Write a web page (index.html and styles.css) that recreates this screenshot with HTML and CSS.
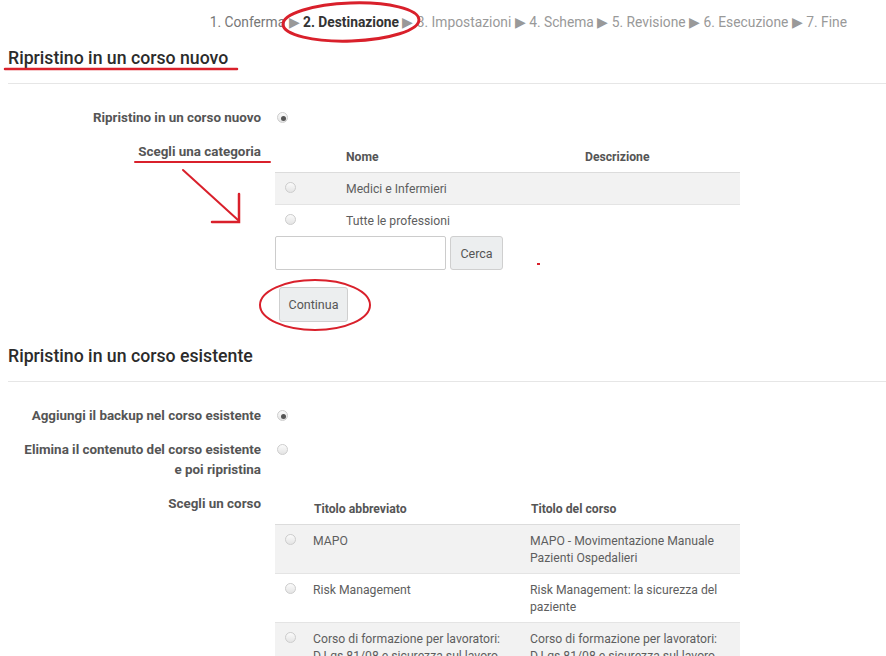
FILE: index.html
```html
<!DOCTYPE html>
<html lang="it">
<head>
    <meta charset="UTF-8">
    <title>Ripristino - Destinazione</title>
    <link rel="stylesheet" href="styles.css">
</head>
<body>
<div class="page">

    <div class="steps">
        <span class="done">1. Conferma</span> &#9654;
        <span class="current">2. Destinazione</span> &#9654;
        <span>3. Impostazioni</span> &#9654;
        <span>4. Schema</span> &#9654;
        <span>5. Revisione</span> &#9654;
        <span>6. Esecuzione</span> &#9654;
        <span>7. Fine</span>
    </div>

    <h2 class="section-title">Ripristino in un corso nuovo</h2>
    <div class="rule"></div>

    <div class="fields">
        <div class="field">
            <div class="label">Ripristino in un corso nuovo</div>
            <div class="control"><input type="radio" class="radio" checked></div>
        </div>
        <div class="field">
            <div class="label">Scegli una categoria</div>
            <div class="control">
                <table class="list list-cat">
                    <colgroup><col class="c-radio"><col class="c-name"><col></colgroup>
                    <thead>
                        <tr><th></th><th>Nome</th><th>Descrizione</th></tr>
                    </thead>
                    <tbody>
                        <tr class="odd"><td><input type="radio" class="radio" name="cat"></td><td>Medici e Infermieri</td><td></td></tr>
                        <tr><td><input type="radio" class="radio" name="cat"></td><td>Tutte le professioni</td><td></td></tr>
                    </tbody>
                </table>
                <div class="search">
                    <input type="text" class="search-input">
                    <button class="btn btn-search">Cerca</button>
                </div>
                <button class="btn btn-continue">Continua</button>
            </div>
        </div>
    </div>

    <h2 class="section-title second">Ripristino in un corso esistente</h2>
    <div class="rule"></div>

    <div class="fields">
        <div class="field">
            <div class="label">Aggiungi il backup nel corso esistente</div>
            <div class="control"><input type="radio" class="radio" name="mode" checked></div>
        </div>
        <div class="field">
            <div class="label">Elimina il contenuto del corso esistente e poi ripristina</div>
            <div class="control"><input type="radio" class="radio" name="mode"></div>
        </div>
        <div class="field">
            <div class="label">Scegli un corso</div>
            <div class="control">
                <table class="list list-course">
                    <colgroup><col class="c-radio2"><col class="c-short"><col></colgroup>
                    <thead>
                        <tr><th></th><th>Titolo abbreviato</th><th>Titolo del corso</th></tr>
                    </thead>
                    <tbody>
                        <tr class="odd"><td><input type="radio" class="radio" name="course"></td><td>MAPO</td><td>MAPO - Movimentazione Manuale Pazienti Ospedalieri</td></tr>
                        <tr><td><input type="radio" class="radio" name="course"></td><td>Risk Management</td><td>Risk Management: la sicurezza del paziente</td></tr>
                        <tr class="odd"><td><input type="radio" class="radio" name="course"></td><td>Corso di formazione per lavoratori: D.Lgs 81/08 e sicurezza sul lavoro - Rischio generico</td><td>Corso di formazione per lavoratori: D.Lgs 81/08 e sicurezza sul lavoro - Rischio generico</td></tr>
                    </tbody>
                </table>
            </div>
        </div>
    </div>

    <!-- red hand-drawn marks -->
    <svg class="marks" width="886" height="656" viewBox="0 0 886 656">
        <g fill="none" stroke="#d9202b" stroke-linecap="round">
            <ellipse cx="351" cy="22" rx="68" ry="19" stroke-width="3" transform="rotate(-2 351 22)"/>
            <line x1="5" y1="69" x2="237" y2="69" stroke-width="2.5"/>
            <line x1="135" y1="162" x2="270" y2="162" stroke-width="2"/>
            <line x1="183" y1="170" x2="238" y2="220" stroke-width="2"/>
            <polyline points="239,194 239,222 212,222" stroke-width="2.5"/>
            <ellipse cx="315" cy="305" rx="55" ry="25" stroke-width="2"/>
        </g>
        <rect x="537" y="263" width="3" height="2" fill="#d9202b"/>
    </svg>

</div>
</body>
</html>
```

FILE: styles.css
```css
body {
    margin: 0;
    font-family: Roboto, "Liberation Sans", Arial, sans-serif;
    font-size: 13px;
    color: #555;
    background: #fff;
}
.page {
    position: relative;
    width: 886px;
    height: 656px;
    overflow: hidden;
}
.steps {
    text-align: right;
    padding: 12px 39px 14px 0;
    line-height: 20px;
    font-size: 13.8px;
    color: #999;
}
.steps .done {
    color: #777;
}
.steps .current {
    color: #333;
    font-weight: 700;
}
.section-title {
    margin: 0 0 0 8px;
    font-size: 17.7px;
    font-weight: 500;
    line-height: 24px;
    color: #2b2b2b;
}
.section-title.second {
    margin-top: 22px;
}
.rule {
    margin: 13px 0 0 8px;
    border-top: 1px solid #e6e6e6;
}
.fields {
    display: flex;
    flex-direction: column;
    gap: 14px;
    margin-top: 24px;
}
.field {
    display: grid;
    grid-template-columns: 243px 465px;
    column-gap: 14px;
    padding-left: 18px;
    align-items: start;
}
.label {
    text-align: right;
    font-weight: 700;
    font-size: 13.4px;
    line-height: 20px;
    color: #555;
}
.control {
    line-height: 20px;
}
.radio {
    -webkit-appearance: none;
    appearance: none;
    width: 11px;
    height: 11px;
    margin: 4px 0 0 2px;
    border: 1px solid #cdcdcd;
    border-radius: 50%;
    background: linear-gradient(#fbfbfb, #e4e4e4);
    vertical-align: top;
    position: relative;
}
.radio:checked::after {
    content: "";
    position: absolute;
    left: 3px;
    top: 3px;
    width: 5px;
    height: 5px;
    border-radius: 50%;
    background: #555;
}
.list {
    width: 465px;
    border-collapse: collapse;
    table-layout: fixed;
}
.list .c-radio { width: 62px; }
.list .c-name { width: 239px; }
.list .c-radio2 { width: 30px; }
.list .c-short { width: 217px; }
.list th {
    text-align: left;
    font-weight: 700;
    font-size: 12.2px;
    color: #555;
    padding: 5px 9px 5px;
    line-height: 20px;
    border-bottom: 1px solid #dcdcdc;
}
.list td {
    padding: 8px 8px 6px;
    font-size: 12.2px;
    line-height: 17px;
    color: #5e5e5e;
    vertical-align: top;
    border-top: 1px solid #e4e4e4;
}
.list td:first-child {
    padding-left: 10px;
    padding-right: 0;
}
.list-cat td + td {
    padding-left: 9px;
}
.list td .radio {
    margin: 1px 0 0 0;
}
.list tr.odd td {
    background: #f2f2f2;
}
.search {
    display: flex;
    gap: 4px;
}
.search-input {
    width: 171px;
    height: 34px;
    box-sizing: border-box;
    border: 1px solid #ccc;
    border-radius: 2px;
    margin: 0;
}
.btn {
    font-family: inherit;
    font-size: 12.5px;
    color: #555;
    background: #eceeef;
    border: 1px solid #cfcfcf;
    border-radius: 3px;
    height: 34px;
    padding: 0;
    cursor: pointer;
}
.btn-search {
    width: 53px;
}
.btn-continue {
    display: block;
    margin: 17px 0 0 4px;
    height: 35px;
    width: 69px;
}
.marks {
    position: absolute;
    left: 0;
    top: 0;
    pointer-events: none;
}
```
